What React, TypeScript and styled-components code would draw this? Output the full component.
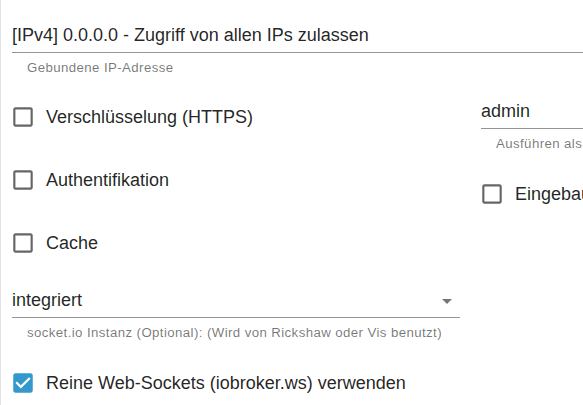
import styled, { createGlobalStyle } from "styled-components";

const GlobalStyle = createGlobalStyle`
  html, body {
    margin: 0;
    padding: 0;
    overflow: hidden;
    background: #fff;
  }
  body {
    font-family: "Liberation Sans", Arial, sans-serif;
    color: rgba(0, 0, 0, 0.87);
  }
`;

const Page = styled.main`
  width: 960px;
  height: 100vh;
  box-sizing: border-box;
  border-left: 1px solid #e3e3e3;
  padding: 20px 0 0 11px;
`;

const FieldBlock = styled.div`
  display: flex;
  flex-direction: column;
`;

const InputLine = styled.div`
  display: flex;
  align-items: center;
  justify-content: space-between;
  height: 21px;
  padding: 5px 0 6px;
  border-bottom: 1px solid rgba(0, 0, 0, 0.42);
  font-size: 18px;
  line-height: 21px;
  white-space: nowrap;
`;

const Helper = styled.p`
  margin: 6px 0 0 15px;
  font-size: 13.25px;
  line-height: 17px;
  letter-spacing: 0.4px;
  color: rgba(0, 0, 0, 0.54);
  white-space: nowrap;
`;

const Columns = styled.div`
  display: grid;
  grid-template-columns: 448px 1fr;
  column-gap: 21px;
  margin-top: 20px;
`;

const Column = styled.div`
  display: flex;
  flex-direction: column;
  gap: 21px;
`;

const CheckRow = styled.label`
  display: flex;
  align-items: center;
  height: 42px;
  margin-left: -2px;
  font-size: 18px;
  white-space: nowrap;
  cursor: pointer;

  svg {
    flex: none;
    margin-right: 10px;
  }
`;

const DropIcon = styled.svg`
  flex: none;
  margin-right: 1px;
  fill: rgba(0, 0, 0, 0.54);
`;

function CheckIcon({ checked }: { checked?: boolean }) {
  if (checked) {
    return (
      <svg width="26" height="26" viewBox="0 0 24 24" fill="#3399cc">
        <path d="M19 3H5c-1.11 0-2 .9-2 2v14c0 1.1.89 2 2 2h14c1.11 0 2-.9 2-2V5c0-1.1-.89-2-2-2zm-9 14l-5-5 1.41-1.41L10 14.17l7.59-7.59L19 8l-9 9z" />
      </svg>
    );
  }
  return (
    <svg width="26" height="26" viewBox="0 0 24 24" fill="rgba(0,0,0,0.6)">
      <path d="M19 5v14H5V5h14m0-2H5c-1.11 0-2 .9-2 2v14c0 1.1.89 2 2 2h14c1.1 0 2-.9 2-2V5c0-1.1-.9-2-2-2z" />
    </svg>
  );
}

function Check({ label, checked }: { label: string; checked?: boolean }) {
  return (
    <CheckRow>
      <CheckIcon checked={checked} />
      {label}
    </CheckRow>
  );
}

export default function App() {
  return (
    <>
      <GlobalStyle />
      <Page>
        <FieldBlock>
          <InputLine>[IPv4] 0.0.0.0 - Zugriff von allen IPs zulassen</InputLine>
          <Helper>Gebundene IP-Adresse</Helper>
        </FieldBlock>

        <Columns>
          <Column>
            <Check label="Verschlüsselung (HTTPS)" />
            <Check label="Authentifikation" />
            <Check label="Cache" />
            <FieldBlock>
              <InputLine>
                integriert
                <DropIcon width="24" height="24" viewBox="0 0 24 24">
                  <path d="M7 10l5 5 5-5z" />
                </DropIcon>
              </InputLine>
              <Helper>socket.io Instanz (Optional): (Wird von Rickshaw oder Vis benutzt)</Helper>
            </FieldBlock>
            <Check label="Reine Web-Sockets (iobroker.ws) verwenden" checked />
          </Column>

          <Column>
            <FieldBlock>
              <InputLine>admin</InputLine>
              <Helper>Ausführen als</Helper>
            </FieldBlock>
            <Check label="Eingebauten Browser verwenden" />
          </Column>
        </Columns>
      </Page>
    </>
  );
}
